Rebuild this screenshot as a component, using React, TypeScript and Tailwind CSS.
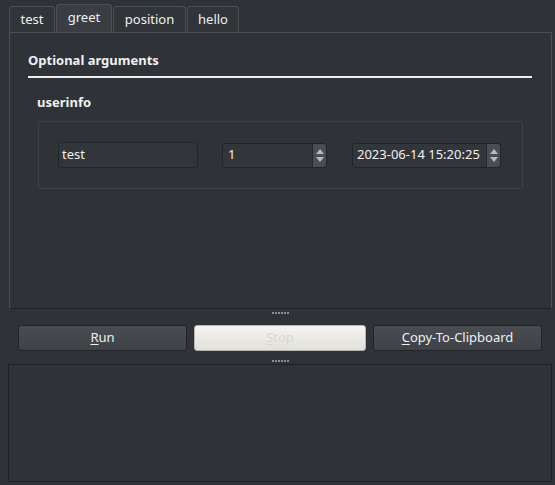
import React from "react";

const font = { fontFamily: '"Noto Sans", "Open Sans", sans-serif' };

function Tab({ label, selected, w }: { label: string; selected?: boolean; w: string }) {
  return (
    <div
      className={`${w} flex items-center justify-center rounded-t-[3px] border border-b-0 border-[#4a4f55] text-[13px] text-[#eff0f1] ${
        selected ? "h-[28px] bg-[#3a3e43] pb-[2px]" : "h-[26px] bg-[#31353a] pt-[1px]"
      }`}
    >
      {label}
    </div>
  );
}

function SpinArrows() {
  return (
    <div className="flex h-full w-[14px] flex-col items-center justify-center gap-[3px] rounded-r-[3px] border-l border-[#25282b] bg-[#4a4e53]">
      <svg width="8" height="5" viewBox="0 0 8 5">
        <path d="M0 5 L4 0 L8 5 Z" fill="#b8bbbe" />
      </svg>
      <svg width="8" height="5" viewBox="0 0 8 5">
        <path d="M0 0 L4 5 L8 0 Z" fill="#b8bbbe" />
      </svg>
    </div>
  );
}

function Dots() {
  return (
    <div className="flex h-[3px] gap-[1px]">
      {[0, 1, 2, 3, 4, 5].map((i) => (
        <div key={i} className="h-[2px] w-[2px] bg-[#8a8e92]" />
      ))}
    </div>
  );
}

export default function App() {
  return (
    <div className="flex h-[485px] w-[555px] flex-col bg-[#2f3337] text-[#eff0f1]" style={font}>
      {/* tabs */}
      <div className="flex items-end pl-[9px] pt-[4px]">
        <Tab label="test" w="w-[46px]" />
        <div className="w-[1px]" />
        <Tab label="greet" selected w="w-[56px]" />
        <div className="w-[1px]" />
        <Tab label="position" w="w-[73px]" />
        <div className="w-[1px]" />
        <Tab label="hello" w="w-[52px]" />
      </div>
      {/* tab panel */}
      <div className="ml-[9px] h-[277px] w-[543px] border border-[#4a4f55] border-b-[#1f2225] bg-[#2f3337] pl-[18px] pr-[18px] pt-[18px]">
        <div className="text-[13px] font-bold leading-[18px] text-[#eff0f1]">Optional arguments</div>
        <div className="mt-[7px] h-[2px] w-[504px] bg-[#eceded]" />
        <div className="mt-[15px] pl-[9px] text-[13px] font-bold leading-[18px]">userinfo</div>
        <div className="ml-[10px] mt-[10px] flex h-[68px] w-[485px] items-center rounded-[3px] border border-[#3d4247] pl-[19px]">
          <div className="flex h-[26px] w-[140px] items-center rounded-[3px] border border-[#222528] bg-[#32363b] pl-[3px] text-[13px]">
            test
          </div>
          <div className="ml-[24px] flex h-[25px] w-[105px] items-center rounded-[3px] border border-[#222528] bg-[#32363b] text-[13px]">
            <span className="flex-1 pl-[5px]">1</span>
            <SpinArrows />
          </div>
          <div className="ml-[25px] flex h-[25px] w-[149px] items-center rounded-[3px] border border-[#222528] bg-[#32363b] text-[13px]">
            <span className="flex-1 pl-[4px]">2023-06-14 15:20:25</span>
            <SpinArrows />
          </div>
        </div>
      </div>
      {/* splitter */}
      <div className="flex h-[16px] items-start justify-center pl-[6px] pt-[3px]">
        <Dots />
      </div>
      {/* buttons */}
      <div className="flex gap-[7px] pl-[18px]">
        <button className="flex h-[26px] w-[169px] items-center justify-center rounded-[3px] border border-[#222528] bg-gradient-to-b from-[#494d52] to-[#3f4348] text-[13px] text-[#eff0f1]">
          <span><span className="underline underline-offset-2">R</span>un</span>
        </button>
        <button className="flex h-[26px] w-[172px] items-center justify-center rounded-[3px] border border-[#b7b5b0] bg-gradient-to-b from-[#f6f4ef] to-[#e2e0da] text-[13px] text-[#d8d6d2]">
          <span><span className="underline underline-offset-2">S</span>top</span>
        </button>
        <button className="flex h-[26px] w-[169px] items-center justify-center rounded-[3px] border border-[#222528] bg-gradient-to-b from-[#494d52] to-[#3f4348] text-[13px] text-[#eff0f1]">
          <span><span className="underline underline-offset-2">C</span>opy-To-Clipboard</span>
        </button>
      </div>
      {/* splitter */}
      <div className="flex h-[13px] items-end justify-center pb-[1px] pl-[6px]">
        <Dots />
      </div>
      {/* text area */}
      <div className="ml-[8px] h-[118px] w-[544px] border border-[#1f2225] bg-[#2f3337]" />
    </div>
  );
}
